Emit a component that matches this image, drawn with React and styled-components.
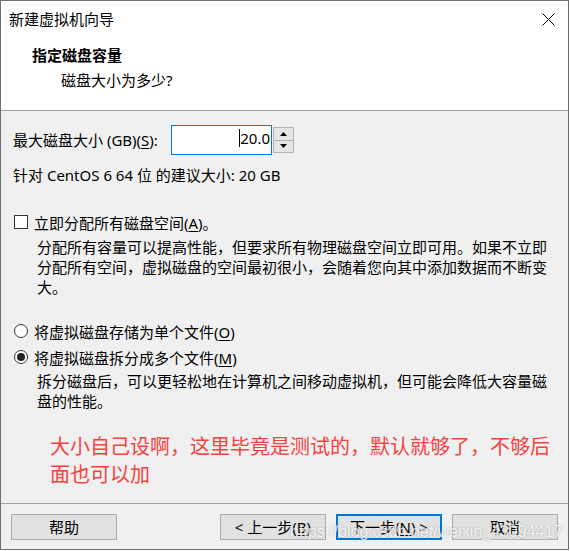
import React from "react";
import styled, { createGlobalStyle } from "styled-components";

const GlobalStyle = createGlobalStyle`
  html, body { margin: 0; padding: 0; background: #ffffff; }
  body {
    font-family: "Noto Sans", "Noto Sans CJK SC", sans-serif;
    font-size: 15px;
    color: #000;
  }
  * { box-sizing: border-box; }
`;

const Window = styled.div`
  position: relative;
  width: 569px;
  height: 550px;
  border: 1px solid #707070;
  background: #f0f0f0;
  display: flex;
  flex-direction: column;
  overflow: hidden;
`;

const TitleBar = styled.div`
  height: 36px;
  background: #fff;
  display: flex;
  align-items: center;
  justify-content: space-between;
  padding: 0 13px 0 8px;
  line-height: 20px;
`;

const Header = styled.div`
  height: 74px;
  background: #fff;
  border-bottom: 1px solid #a0a0a0;
  padding: 8px 0 0 31px;
`;

const Heading = styled.div`
  font-weight: bold;
  line-height: 20px;
`;

const SubHeading = styled.div`
  margin-top: 5px;
  padding-left: 29px;
  line-height: 20px;
`;

const Body = styled.div`
  flex: 1;
  padding: 14px 0 0 12px;
  display: flex;
  flex-direction: column;
`;

const SizeRow = styled.div`
  display: flex;
  align-items: center;
  height: 30px;
`;

const Label = styled.div`
  width: 158px;
  line-height: 20px;
  white-space: nowrap;
`;

const InputBox = styled.div`
  width: 101px;
  height: 30px;
  border: 1px solid #0078d7;
  background: #fff;
  display: flex;
  align-items: center;
  justify-content: flex-end;
  padding: 0 1px 4px 0;
  line-height: 20px;
`;

const Caret = styled.span`
  display: inline-block;
  width: 1px;
  height: 18px;
  background: #000;
`;

const Spinner = styled.div`
  width: 21px;
  height: 26px;
  margin-left: 1px;
  display: flex;
  flex-direction: column;
  border: 1px solid #b4b4b4;
  background: #e6e6e6;
`;

const SpinButton = styled.div`
  flex: 1;
  display: flex;
  align-items: center;
  justify-content: center;
  border-top: ${(p) => (p.$bottom ? "1px solid #b4b4b4" : "none")};
`;

const Line = styled.div`
  margin-top: ${(p) => p.$mt || 0}px;
  line-height: 20px;
  white-space: nowrap;
`;

const OptionRow = styled.div`
  margin-top: ${(p) => p.$mt || 0}px;
  display: flex;
  align-items: center;
  height: 20px;
  gap: 6px;
  white-space: nowrap;
`;

const CheckBox = styled.span`
  margin-left: 1px;
  width: 14px;
  height: 14px;
  border: 1px solid #333;
  background: #fff;
`;

const Radio = styled.span`
  margin-left: 1px;
  width: 14px;
  height: 14px;
  border: 1px solid #333;
  border-radius: 50%;
  background: #fff;
  display: flex;
  align-items: center;
  justify-content: center;
  &::after {
    content: "";
    display: ${(p) => (p.$checked ? "block" : "none")};
    width: 8px;
    height: 8px;
    border-radius: 50%;
    background: #222;
  }
`;

const Para = styled.p`
  margin: ${(p) => p.$mt || 0}px 0 0 24px;
  width: 516px;
  line-height: 20px;
`;

const Note = styled.p`
  margin: 22px 0 0 37px;
  width: 505px;
  font-size: 20px;
  line-height: 28px;
  color: #f4423f;
`;

const Key = styled.span`
  text-decoration: underline;
  text-underline-offset: 2px;
`;

const Footer = styled.div`
  height: 46px;
  border-top: 1px solid #a0a0a0;
  padding: 10px 10px 0 10px;
  display: flex;
  gap: 10px;
`;

const Button = styled.button`
  width: 106px;
  height: 26px;
  padding: 0;
  margin: 0;
  margin-right: ${(p) => (p.$push ? "auto" : "0")};
  background: #e1e1e1;
  border: ${(p) => (p.$primary ? "2px solid #0078d7" : "1px solid #adadad")};
  font-family: inherit;
  font-size: 15px;
  line-height: 20px;
  color: #000;
  text-align: center;
`;

const Watermark = styled.div`
  position: absolute;
  left: 289px;
  top: 522px;
  font-family: "Liberation Sans", Arial, sans-serif;
  font-size: 16px;
  line-height: 18px;
  color: rgba(255, 255, 255, 0.82);
  text-shadow: 0 0 2px rgba(0, 0, 0, 0.28);
  white-space: nowrap;
  pointer-events: none;
`;

const CloseIcon = () => (
  <svg width="13" height="13" viewBox="0 0 13 13">
    <path d="M0.5 0.5 L12.5 12.5 M12.5 0.5 L0.5 12.5" stroke="#000" strokeWidth="1" fill="none" />
  </svg>
);

const Arrow = ({ down }) => (
  <svg width="7" height="4" viewBox="0 0 7 4">
    <path d={down ? "M0 0 H7 L3.5 4 Z" : "M0 4 H7 L3.5 0 Z"} fill="#000" />
  </svg>
);

export default function App() {
  return (
    <>
      <GlobalStyle />
      <Window>
        <TitleBar>
          <span>新建虚拟机向导</span>
          <CloseIcon />
        </TitleBar>
        <Header>
          <Heading>指定磁盘容量</Heading>
          <SubHeading>磁盘大小为多少?</SubHeading>
        </Header>
        <Body>
          <SizeRow>
            <Label>
              最大磁盘大小 (GB)(<Key>S</Key>):
            </Label>
            <InputBox>
              <Caret />
              <span>20.0</span>
            </InputBox>
            <Spinner>
              <SpinButton>
                <Arrow />
              </SpinButton>
              <SpinButton $bottom>
                <Arrow down />
              </SpinButton>
            </Spinner>
          </SizeRow>
          <Line $mt={10}>针对 CentOS 6 64 位 的建议大小: 20 GB</Line>
          <OptionRow $mt={27}>
            <CheckBox />
            <span>
              立即分配所有磁盘空间(<Key>A</Key>)。
            </span>
          </OptionRow>
          <Para $mt={5}>
            分配所有容量可以提高性能，但要求所有物理磁盘空间立即可用。如果不立即分配所有空间，虚拟磁盘的空间最初很小，会随着您向其中添加数据而不断变大。
          </Para>
          <OptionRow $mt={24}>
            <Radio />
            <span>
              将虚拟磁盘存储为单个文件(<Key>O</Key>)
            </span>
          </OptionRow>
          <OptionRow $mt={6}>
            <Radio $checked />
            <span>
              将虚拟磁盘拆分成多个文件(<Key>M</Key>)
            </span>
          </OptionRow>
          <Para $mt={4}>
            拆分磁盘后，可以更轻松地在计算机之间移动虚拟机，但可能会降低大容量磁盘的性能。
          </Para>
          <Note>大小自己设啊，这里毕竟是测试的，默认就够了，不够后面也可以加</Note>
        </Body>
        <Footer>
          <Button $push>帮助</Button>
          <Button>
            &lt; 上一步(<Key>B</Key>)
          </Button>
          <Button $primary>
            下一步(<Key>N</Key>) &gt;
          </Button>
          <Button>取消</Button>
        </Footer>
        <Watermark>https://blog.csdn.net/weixin_43094417</Watermark>
      </Window>
    </>
  );
}
